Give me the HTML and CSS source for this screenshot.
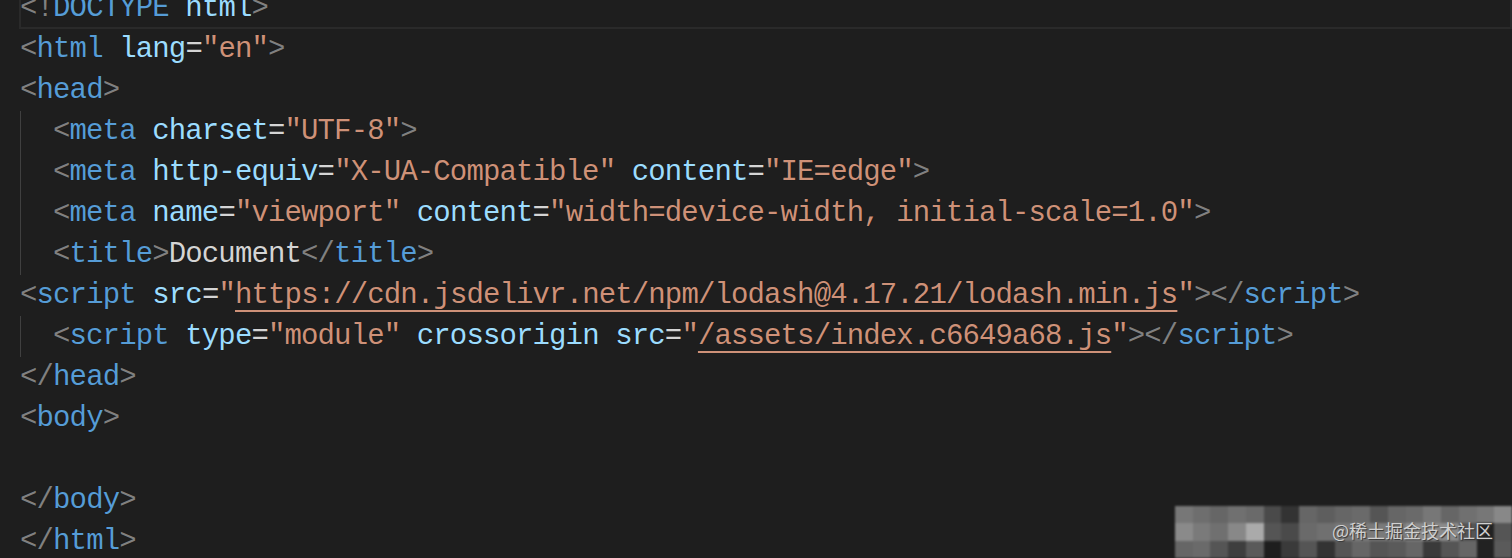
FILE: index.html
```html
<!DOCTYPE html>
<html lang="en">
<head>
    <meta charset="UTF-8">
    <meta name="viewport" content="width=device-width, initial-scale=1.0">
    <title>index.html</title>
    <link rel="stylesheet" href="styles.css">
</head>
<body>
    <div class="editor">
        <div class="line current"><span class="code"><span class="p">&lt;!</span><span class="t">DOCTYPE</span> <span class="a">html</span><span class="p">&gt;</span></span></div>
        <div class="line"><span class="code"><span class="p">&lt;</span><span class="t">html</span> <span class="a">lang</span>=<span class="s">"en"</span><span class="p">&gt;</span></span></div>
        <div class="line"><span class="code"><span class="p">&lt;</span><span class="t">head</span><span class="p">&gt;</span></span></div>
        <div class="line"><span class="indent"></span><span class="code"><span class="p">&lt;</span><span class="t">meta</span> <span class="a">charset</span>=<span class="s">"UTF-8"</span><span class="p">&gt;</span></span></div>
        <div class="line"><span class="indent"></span><span class="code"><span class="p">&lt;</span><span class="t">meta</span> <span class="a">http-equiv</span>=<span class="s">"X-UA-Compatible"</span> <span class="a">content</span>=<span class="s">"IE=edge"</span><span class="p">&gt;</span></span></div>
        <div class="line"><span class="indent"></span><span class="code"><span class="p">&lt;</span><span class="t">meta</span> <span class="a">name</span>=<span class="s">"viewport"</span> <span class="a">content</span>=<span class="s">"width=device-width, initial-scale=1.0"</span><span class="p">&gt;</span></span></div>
        <div class="line"><span class="indent"></span><span class="code"><span class="p">&lt;</span><span class="t">title</span><span class="p">&gt;</span><span class="x">Document</span><span class="p">&lt;/</span><span class="t">title</span><span class="p">&gt;</span></span></div>
        <div class="line"><span class="code"><span class="p">&lt;</span><span class="t">script</span> <span class="a">src</span>=<span class="s">"<span class="link">https://cdn.jsdelivr.net/npm/lodash@4.17.21/lodash.min.js</span>"</span><span class="p">&gt;&lt;/</span><span class="t">script</span><span class="p">&gt;</span></span></div>
        <div class="line"><span class="indent"></span><span class="code"><span class="p">&lt;</span><span class="t">script</span> <span class="a">type</span>=<span class="s">"module"</span> <span class="a">crossorigin</span> <span class="a">src</span>=<span class="s">"<span class="link">/assets/index.c6649a68.js</span>"</span><span class="p">&gt;&lt;/</span><span class="t">script</span><span class="p">&gt;</span></span></div>
        <div class="line"><span class="code"><span class="p">&lt;/</span><span class="t">head</span><span class="p">&gt;</span></span></div>
        <div class="line"><span class="code"><span class="p">&lt;</span><span class="t">body</span><span class="p">&gt;</span></span></div>
        <div class="line"><span class="code"></span></div>
        <div class="line"><span class="code"><span class="p">&lt;/</span><span class="t">body</span><span class="p">&gt;</span></span></div>
        <div class="line"><span class="code"><span class="p">&lt;/</span><span class="t">html</span><span class="p">&gt;</span></span></div>
    </div>

    <!-- blurred watermark corner -->
    <div class="mosaic">
        <div class="cells">
            <i class="g77"></i><i class="g6e"></i><i class="g66"></i><i class="g70"></i><i class="g6a"></i><i class="g4a"></i><i class="g33"></i><i class="g66"></i><i class="g5e"></i><i class="g66"></i><i class="g6a"></i><i class="g55"></i><i class="g66"></i><i class="g6a"></i><i class="g77"></i><i class="g66"></i><i class="g70"></i><i class="g77"></i><i class="g88"></i>
            <i class="g8a"></i><i class="g7a"></i><i class="g70"></i><i class="g88"></i><i class="gaa"></i><i class="g55"></i><i class="g4a"></i><i class="g6a"></i><i class="g70"></i><i class="g77"></i><i class="g7a"></i><i class="g7a"></i><i class="g7a"></i><i class="g8a"></i><i class="g8a"></i><i class="g8a"></i><i class="g55"></i><i class="g22"></i><i class="g55"></i>
            <i class="g66"></i><i class="g6a"></i><i class="g55"></i><i class="g3e"></i><i class="g5a"></i><i class="g1e"></i><i class="g3a"></i><i class="g55"></i><i class="g33"></i><i class="g55"></i><i class="g66"></i><i class="g55"></i><i class="g5a"></i><i class="g66"></i><i class="g3a"></i><i class="g55"></i><i class="g66"></i><i class="g22"></i><i class="g5a"></i>
        </div>
        <span class="mark">@稀土掘金技术社区</span>
    </div>
</body>
</html>
```

FILE: styles.css
```css
body {
    margin: 0;
    background: #1e1e1e;
    overflow: hidden;
    height: 558px;
}

.editor {
    margin-top: -12px;
    padding-left: 19px;
    font-family: "Liberation Mono", "DejaVu Sans Mono", monospace;
    font-size: 29px;
    letter-spacing: -0.87px;
    color: #d4d4d4;
    text-shadow: 0 0 1px rgba(0, 0, 0, 0.4);
}

.line {
    display: flex;
    height: 41px;
    line-height: 41px;
    padding-left: 1px;
}

.current {
    outline: 2px solid #2a2a2a;
    outline-offset: -2px;
}

.indent {
    width: 33px;
    flex: none;
    border-left: 1px solid #404040;
    box-sizing: border-box;
}

.code {
    white-space: pre;
}

.p { color: #808080; }
.t { color: #569cd6; }
.a { color: #9cdcfe; }
.s { color: #ce9178; }
.x { color: #d4d4d4; }

.link {
    text-decoration: underline;
    text-decoration-thickness: 2px;
    text-underline-offset: 7px;
}

/* watermark */
.mosaic {
    position: absolute;
    left: 1175px;
    top: 506px;
    width: 337px;
    height: 52px;
}

.cells {
    display: grid;
    grid-template-columns: repeat(19, 1fr);
    grid-template-rows: repeat(3, 1fr);
    height: 100%;
    filter: blur(1px);
}

.cells i { display: block; }

.g1e { background: #1e1e1e; }
.g22 { background: #222; }
.g33 { background: #333; }
.g3a { background: #3a3a3a; }
.g3e { background: #3e3e3e; }
.g4a { background: #4a4a4a; }
.g55 { background: #555; }
.g5a { background: #5a5a5a; }
.g5e { background: #5e5e5e; }
.g66 { background: #666; }
.g6a { background: #6a6a6a; }
.g6e { background: #6e6e6e; }
.g70 { background: #707070; }
.g77 { background: #777; }
.g7a { background: #7a7a7a; }
.g88 { background: #888; }
.g8a { background: #8a8a8a; }
.gaa { background: #aaa; }

.mark {
    position: absolute;
    left: 157px;
    top: 12px;
    font-family: "Noto Sans CJK SC", sans-serif;
    font-size: 18px;
    line-height: 24px;
    color: #d0d0d0;
    text-shadow: 1px 1px 1px #333;
}
```
